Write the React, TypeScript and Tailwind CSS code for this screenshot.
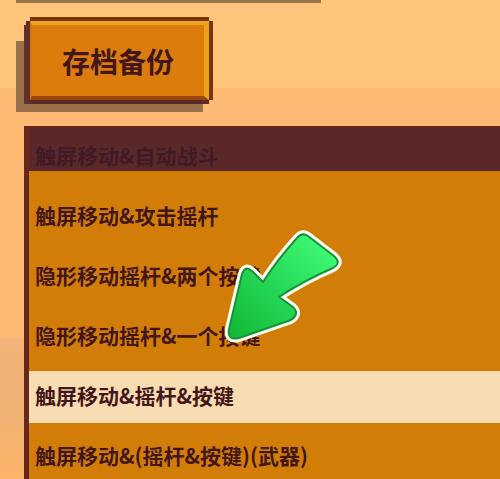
import React, { useState } from 'react';

interface ControlMode {
  id: number;
  label: string;
}

const modes: ControlMode[] = [
  { id: 1, label: '触屏移动&攻击摇杆' },
  { id: 2, label: '隐形移动摇杆&两个按键' },
  { id: 3, label: '隐形移动摇杆&一个按键' },
  { id: 4, label: '触屏移动&摇杆&按键' },
  { id: 5, label: '触屏移动&(摇杆&按键)(武器)' },
];

function PointerArrow() {
  const shape =
    'M94 11 Q99 5 105 9 L131 29 Q139 36 130 41 Q102 53 76 70 L90 80 Q97 87 88 93 L36 111 Q24 114 26 102 L39 47 Q42 38 49 44 L60 55 Q74 33 94 11 Z';
  return (
    <svg
      viewBox="0 0 144 120"
      className="pointer-events-none absolute top-[227px] left-[203px] w-36 h-30"
      aria-hidden="true"
    >
      <defs>
        <linearGradient id="arrowFill" x1="1" y1="0" x2="0" y2="1">
          <stop offset="0.1" stopColor="#3efa75" />
          <stop offset="0.5" stopColor="#27da58" />
          <stop offset="1" stopColor="#10b735" />
        </linearGradient>
      </defs>
      <path d={shape} fill="#fff" stroke="#fffff4" strokeWidth="8" strokeLinejoin="round" />
      <path d={shape} fill="url(#arrowFill)" stroke="#16933a" strokeWidth="2" strokeLinejoin="round" />
    </svg>
  );
}

export default function App() {
  const [selected, setSelected] = useState(4);

  return (
    <main className="relative min-h-screen overflow-hidden bg-[linear-gradient(#feb974_0%,#feb974_69%,#f2b278_70%,#f2b274_85%,#fdb467_100%)] font-['Noto_Sans_CJK_SC','Noto_Sans',sans-serif] text-[#431719]">
      {/* Top area with the backup button */}
      <header className="h-[88px] bg-[#ffc57c]">
        <div className="ml-4 h-[3px] w-[61%] bg-[#9b7647]" />
        <div className="relative ml-[30px] mt-[18px] w-max">
          <span className="absolute -left-3.5 right-1.5 top-5 -bottom-3 bg-[#9a704b]" />
          <button
            type="button"
            className="relative h-[79px] border-t-4 border-r-5 border-b-4 border-l-2 border-t-[#e9a326] border-r-[#f0a01c] border-b-[#9f460d] border-l-[#d87513] bg-[#db7c0d] px-7.5 text-[28px] font-bold leading-8 shadow-[0_-4px_#753604,4px_0_#753604,0_4px_#5b2926,-6px_4px_#62302b,-4px_0_#5b2926]"
          >
            存档备份
          </button>
        </div>
      </header>

      {/* Control mode list */}
      <section className="ml-6 mt-[38px] border-l-5 border-t-2 border-[#66281a] bg-[#d37d09]">
        <h2 className="flex h-[43px] items-end bg-[#5a2829] px-1.5 pb-0.5 text-[21px] font-bold leading-7 text-[#401a27]">
          触屏移动&amp;自动战斗
        </h2>
        <ul className="pt-4">
          {modes.map(m => (
            <li key={m.id} className="py-1">
              <button
                type="button"
                aria-pressed={selected === m.id}
                onClick={() => setSelected(m.id)}
                className={`flex h-13 w-full items-center whitespace-nowrap px-1.5 pb-1 text-[21px] font-bold leading-7 ${
                  selected === m.id ? 'bg-[#f8ddb3]' : ''
                }`}
              >
                {m.label}
              </button>
            </li>
          ))}
        </ul>
      </section>

      <PointerArrow />
    </main>
  );
}
